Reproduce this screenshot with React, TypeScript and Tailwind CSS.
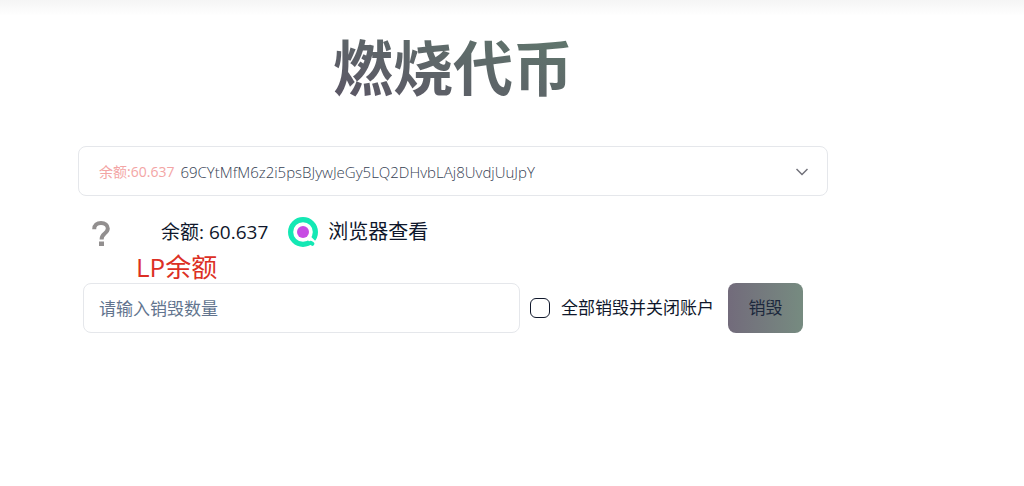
import { useState } from 'react';

const accounts = [
  {
    mint: '69CYtMfM6z2i5psBJywJeGy5LQ2DHvbLAj8UvdjUuJpY',
    balance: '60.637',
  },
];

const ChevronIcon = () => (
  <svg
    className="pointer-events-none absolute right-[19px] size-3"
    viewBox="0 0 12 12"
    fill="none"
    stroke="#71717a"
    strokeWidth="1.5"
    aria-hidden="true"
  >
    <path d="M0.5 3L6 8.5L11.5 3" />
  </svg>
);

const UnknownTokenIcon = () => (
  <svg className="h-7 w-5" viewBox="0 0 20 28" fill="none" aria-hidden="true">
    <path
      d="M2.2 11.2C2.2 7.2 5 5 9 5C13 5 15.8 7.2 15.8 10.6C15.8 13.2 14.2 14.4 12.4 15.8C10.4 17.3 9.6 18.4 9.6 21.4"
      stroke="#928f8f"
      strokeWidth="4"
    />
    <path d="M7 23.5H12V28H7Z" fill="#928f8f" />
  </svg>
);

const ExplorerIcon = () => (
  <svg className="size-[30px] shrink-0" viewBox="0 0 30 30" fill="none" aria-hidden="true">
    <circle cx="15" cy="15" r="12.4" stroke="#14e8b4" strokeWidth="5.2" />
    <path d="M19 19L29 29" stroke="#fff" strokeWidth="4.6" />
    <path d="M22.6 25.8L24.4 26.8" stroke="#14e8b4" strokeWidth="4" strokeLinecap="round" />
    <circle cx="15" cy="15" r="6" fill="#c74be3" />
  </svg>
);

export default function App() {
  const [mint, setMint] = useState(accounts[0].mint);
  const [amount, setAmount] = useState('');
  const [closeAccount, setCloseAccount] = useState(false);

  const account = accounts.find((item) => item.mint === mint) ?? accounts[0];

  return (
    <div className="min-h-screen bg-white font-['Open_Sans','Noto_Sans_CJK_SC',sans-serif] text-slate-900">
      <div className="h-4 bg-linear-to-b from-neutral-100 to-white" />
      <main className="mr-[196px] ml-[78px]">
        <h1 className="mx-auto mt-3 w-fit bg-linear-to-tr from-[#5a5364] to-[#60796d] bg-clip-text text-[60px] leading-20 font-bold text-transparent">
          燃烧代币
        </h1>

        <div className="relative mt-[38px] flex h-[50px] items-center rounded-lg border border-gray-200 pt-0.5 pl-5">
          <label htmlFor="account" className="mr-1.5 text-sm text-[#f3a5a5]">
            余额:{account.balance}
          </label>
          <select
            id="account"
            className="h-full min-w-0 flex-1 appearance-none bg-transparent pr-10 text-[15px] font-light text-gray-700 outline-none"
            value={mint}
            onChange={(e) => setMint(e.target.value)}
          >
            {accounts.map((item) => (
              <option key={item.mint} value={item.mint}>
                {item.mint}
              </option>
            ))}
          </select>
          <ChevronIcon />
        </div>

        <div className="mt-5 ml-3.5 flex h-8 items-center">
          <UnknownTokenIcon />
          <span className="ml-[49px] text-[19px]">余额: {account.balance}</span>
          <a
            href="#explorer"
            className="ml-5 flex items-center gap-[10px] text-xl"
          >
            <ExplorerIcon />
            浏览器查看
          </a>
        </div>

        <p className="pt-1 pl-[58px] text-[26px] leading-[31px] text-[#dc2f24]">
          LP余额
        </p>

        <form
          className="mr-[25px] ml-[5px] flex items-center"
          onSubmit={(e) => e.preventDefault()}
        >
          <input
            type="text"
            aria-label="请输入销毁数量"
            placeholder="请输入销毁数量"
            className="h-[50px] min-w-0 flex-1 rounded-lg border border-gray-200 px-[15px] text-[17px] outline-none placeholder:text-slate-500"
            value={amount}
            onChange={(e) => setAmount(e.target.value)}
          />
          <label className="mr-[14px] ml-[10px] flex items-center gap-[11px] text-[17px]">
            <input
              type="checkbox"
              className="size-5 appearance-none rounded-md border border-slate-900 checked:bg-slate-900"
              checked={closeAccount}
              onChange={(e) => setCloseAccount(e.target.checked)}
            />
            全部销毁并关闭账户
          </label>
          <button
            type="submit"
            className="h-[50px] w-[75px] rounded-lg bg-linear-to-r from-[#726b7b] to-[#768b80] text-[17px] text-slate-800"
          >
            销毁
          </button>
        </form>
      </main>
    </div>
  );
}
